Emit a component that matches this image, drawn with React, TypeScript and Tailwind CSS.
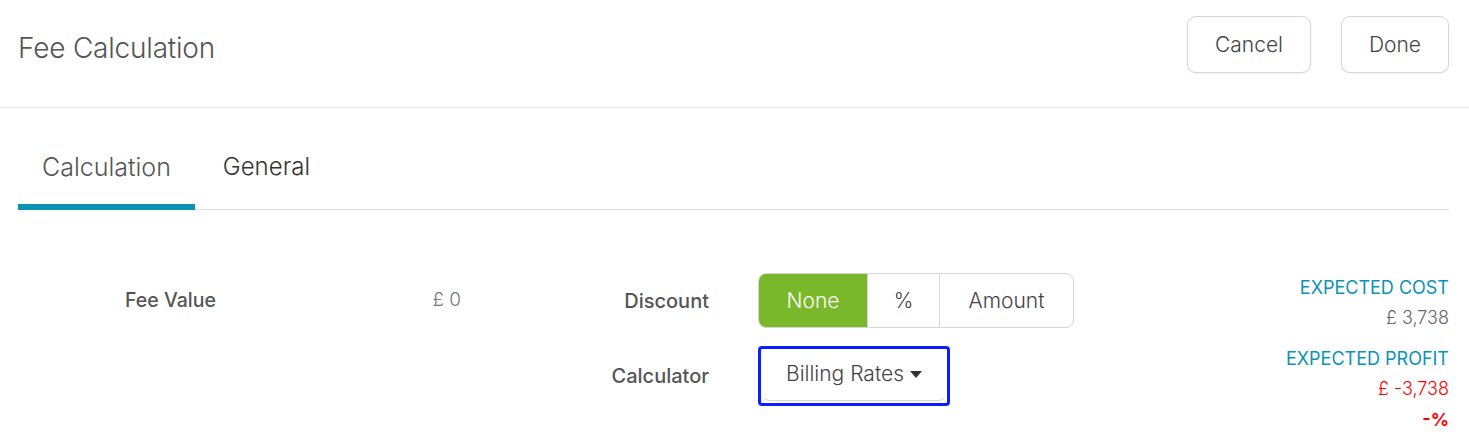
import { useState } from 'react';

export default function App() {
  const [tab, setTab] = useState('calculation');
  const [discount, setDiscount] = useState('none');

  return (
    <div className="min-h-screen bg-white text-[#555] font-['Inter',sans-serif]">
      {/* Header */}
      <div className="flex items-start justify-between h-[108px] border-b border-[#e6e6e6] pl-[18px] pr-[20px]">
        <h1 className="mt-[30px] text-[28px] leading-[36px] font-light tracking-[-0.2px] text-[#555]">
          Fee Calculation
        </h1>
        <div className="flex gap-[30px] mt-[16px]">
          <button className="h-[57px] w-[124px] rounded-[9px] border border-[#d6d6d6] bg-white text-[21px] font-light text-[#444] shadow-[0_1px_2px_rgba(0,0,0,0.06)]">
            Cancel
          </button>
          <button className="h-[57px] w-[108px] rounded-[9px] border border-[#d6d6d6] bg-white text-[21px] font-light text-[#444] shadow-[0_1px_2px_rgba(0,0,0,0.06)]">
            Done
          </button>
        </div>
      </div>

      {/* Tabs */}
      <div className="ml-[18px] mr-[20px] mt-[42px] flex border-b border-[#dedede]">
        <button
          onClick={() => setTab('calculation')}
          className={`-mb-px px-[24px] pb-[20px] text-[25px] leading-[34px] font-light border-b-[6px] ${
            tab === 'calculation' ? 'border-[#0a93b5] text-[#555]' : 'border-transparent text-[#333]'
          }`}
        >
          Calculation
        </button>
        <button
          onClick={() => setTab('general')}
          className={`-mb-px px-[28px] pb-[20px] text-[24px] leading-[34px] font-light border-b-[6px] ${
            tab === 'general' ? 'border-[#0a93b5] text-[#555]' : 'border-transparent text-[#333]'
          }`}
        >
          General
        </button>
      </div>

      {/* Content */}
      <div className="flex items-start pl-[18px] pr-[20px] mt-[63px]">
        {/* Fee value */}
        <div className="w-[443px] h-[55px] flex items-center justify-between pl-[107px]">
          <span className="text-[19.5px] font-medium text-[#555]">Fee Value</span>
          <span className="text-[19px] font-light text-[#777]">£ 0</span>
        </div>

        {/* Discount + calculator */}
        <div className="grid grid-cols-[248px_auto] content-start gap-x-[49px] gap-y-[18px] items-center">
          <span className="text-right text-[20px] font-medium text-[#555]">Discount</span>
          <div className="flex h-[55px] w-[316px] rounded-[8px] border border-[#d6d6d6] overflow-hidden text-[21px] font-light">
            <button
              onClick={() => setDiscount('none')}
              className={`w-[108px] ${discount === 'none' ? 'bg-[#78b82a] text-white' : 'text-[#444]'}`}
            >
              None
            </button>
            <button
              onClick={() => setDiscount('pct')}
              className={`w-[72px] border-l border-[#d6d6d6] ${discount === 'pct' ? 'bg-[#78b82a] text-white' : 'text-[#444]'}`}
            >
              %
            </button>
            <button
              onClick={() => setDiscount('amount')}
              className={`flex-1 border-l border-[#d6d6d6] ${discount === 'amount' ? 'bg-[#78b82a] text-white' : 'text-[#444]'}`}
            >
              Amount
            </button>
          </div>

          <span className="text-right text-[20px] font-medium text-[#555]">Calculator</span>
          <div className="w-[192px] h-[60px] rounded-[4px] border-[3px] border-[#0a1eff] p-[2px]">
            <button className="w-full h-full flex items-center justify-center gap-[6px] rounded-[6px] border-b border-[#d6d6d6] text-[21px] font-light text-[#444] pb-[4px]">
              Billing Rates
              <svg width="12" height="7" viewBox="0 0 12 7" className="mt-[2px]">
                <path d="M0 0h12L6 7z" fill="#333" />
              </svg>
            </button>
          </div>
        </div>

        {/* Expected */}
        <div className="flex-1 text-right text-[18px] leading-[30px]">
          <div className="text-[#0a93b5]">EXPECTED COST</div>
          <div className="font-light text-[#666]">£ 3,738</div>
          <div className="mt-[11px] text-[#0a93b5]">EXPECTED PROFIT</div>
          <div className="font-light text-[#ff0000]">£ -3,738</div>
          <div className="font-bold text-[#ff0000] leading-[32px]">-%</div>
        </div>
      </div>
    </div>
  );
}
